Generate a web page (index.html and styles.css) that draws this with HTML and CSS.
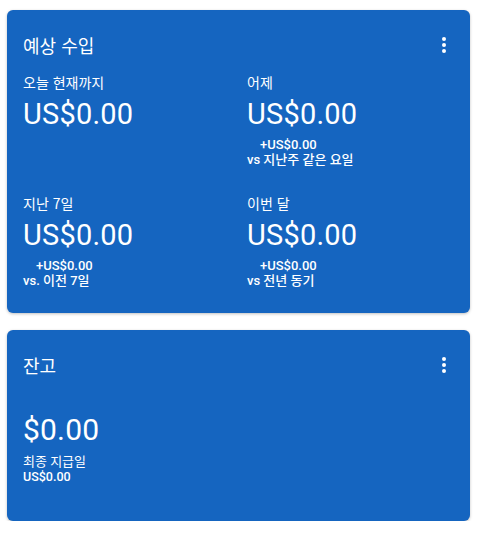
FILE: index.html
```html
<!DOCTYPE html>
<html lang="ko">
<head>
<meta charset="utf-8">
<link rel="stylesheet" href="styles.css">
</head>
<body>
<div class="page">
  <section class="card card-earnings">
    <header class="card-head">
      <h2 class="card-title">예상 수입</h2>
      <svg class="more" viewBox="0 0 24 24" width="24" height="24"><circle cx="12" cy="6" r="2"/><circle cx="12" cy="12" r="2"/><circle cx="12" cy="18" r="2"/></svg>
    </header>
    <div class="grid">
      <div class="cell">
        <div class="label">오늘 현재까지</div>
        <div class="value">US$0.00</div>
      </div>
      <div class="cell">
        <div class="label">어제</div>
        <div class="value">US$0.00</div>
        <div class="delta">+US$0.00</div>
        <div class="compare">vs 지난주 같은 요일</div>
      </div>
      <div class="cell">
        <div class="label">지난 7일</div>
        <div class="value">US$0.00</div>
        <div class="delta">+US$0.00</div>
        <div class="compare">vs. 이전 7일</div>
      </div>
      <div class="cell">
        <div class="label">이번 달</div>
        <div class="value">US$0.00</div>
        <div class="delta">+US$0.00</div>
        <div class="compare">vs 전년 동기</div>
      </div>
    </div>
  </section>
  <section class="card card-balance">
    <header class="card-head">
      <h2 class="card-title">잔고</h2>
      <svg class="more" viewBox="0 0 24 24" width="24" height="24"><circle cx="12" cy="6" r="2"/><circle cx="12" cy="12" r="2"/><circle cx="12" cy="18" r="2"/></svg>
    </header>
    <div class="balance">
      <div class="value">$0.00</div>
      <div class="compare">최종 지급일</div>
      <div class="paid">US$0.00</div>
    </div>
  </section>
</div>
</body>
</html>
```
FILE: styles.css
```css
html, body {
  margin: 0;
  padding: 0;
  background: #ffffff;
}
body {
  font-family: Roboto, "Noto Sans CJK KR", sans-serif;
  color: #ffffff;
}
.page {
  padding: 10px 15px 0 7px;
  display: flex;
  flex-direction: column;
  gap: 17px;
}
.card {
  background: #1565c0;
  border-radius: 6px;
  box-shadow: 0 1px 3px rgba(0,0,0,0.25);
  padding: 0 14px 0 16px;
}
.card-earnings { height: 303px; }
.card-balance { height: 191px; }
.card-head {
  display: flex;
  align-items: center;
  justify-content: space-between;
  padding-top: 23px;
  height: 24px;
}
.card-title {
  margin: 0;
  font-family: "Noto Sans CJK KR", Roboto, sans-serif;
  font-weight: 400;
  font-size: 18px;
  line-height: 24px;
}
.more {
  fill: #ffffff;
  display: block;
}
.grid {
  display: grid;
  grid-template-columns: 224px 1fr;
  grid-auto-rows: 121px;
  margin-top: 15px;
}
.label {
  font-family: "Noto Sans CJK KR", Roboto, sans-serif;
  font-size: 14px;
  line-height: 20px;
}
.value {
  font-family: Roboto, sans-serif;
  font-size: 29px;
  line-height: 36px;
  margin-top: 4px;
  letter-spacing: 0.2px;
}
.delta {
  font-family: Roboto, sans-serif;
  font-weight: 500;
  font-size: 13px;
  line-height: 15px;
  padding-left: 13px;
  margin-top: 5px;
}
.compare {
  font-family: Roboto, "Noto Sans CJK KR", sans-serif;
  font-weight: 500;
  font-size: 13px;
  line-height: 15px;
}
.balance {
  margin-top: 35px;
}
.balance .value {
  margin-top: 0;
  font-size: 30px;
}
.balance .compare {
  margin-top: 6px;
  font-weight: 400;
  font-size: 13px;
  line-height: 16px;
}
.paid {
  font-family: Roboto, sans-serif;
  font-weight: 500;
  font-size: 12.5px;
  line-height: 14px;
}
```
